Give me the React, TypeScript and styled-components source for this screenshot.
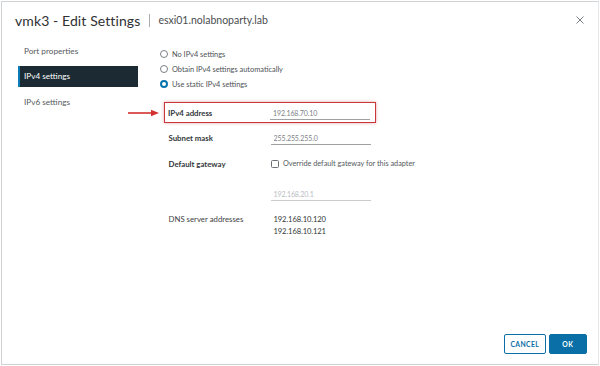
import React from "react";
import styled, { createGlobalStyle } from "styled-components";

const GlobalStyle = createGlobalStyle`
  html, body { margin: 0; padding: 0; background: #ffffff; }
  body { font-family: Lato, "Open Sans", "Liberation Sans", sans-serif; }
  * { box-sizing: border-box; }
`;

const Page = styled.div`
  width: 600px;
  height: 366px;
  padding: 1px;
  background: #ffffff;
`;

const Dialog = styled.div`
  width: 598px;
  height: 364px;
  border: 1px solid #cfd3d6;
  border-right-color: #e4e6e8;
  display: flex;
  flex-direction: column;
  background: #ffffff;
`;

const Header = styled.div`
  height: 36px;
  display: flex;
  align-items: center;
  padding: 0 12px 0 13px;
  flex: none;
`;

const Title = styled.div`
  font-size: 14px;
  color: #2f3133;
  letter-spacing: 0.1px;
`;

const Divider = styled.div`
  width: 1px;
  height: 13px;
  background: #a9adb0;
  margin: 0 8px 0 9px;
`;

const Subtitle = styled.div`
  font-size: 10.5px;
  color: #4a4d50;
`;

const CloseButton = styled.button`
  margin-left: auto;
  width: 12px;
  height: 12px;
  padding: 0;
  border: none;
  background: transparent;
  display: flex;
  align-items: center;
  justify-content: center;
`;

const Body = styled.div`
  flex: 1;
  display: flex;
  min-height: 0;
`;

const Nav = styled.div`
  width: 120px;
  margin-left: 15.5px;
  padding-top: 2.2px;
  display: flex;
  flex-direction: column;
  gap: 4px;
  flex: none;
`;

const NavItem = styled.div<{ $active?: boolean }>`
  height: 21.5px;
  display: flex;
  align-items: center;
  padding-left: 4.5px;
  font-size: 8.2px;
  color: ${(p) => (p.$active ? "#ffffff" : "#565a5e")};
  background: ${(p) => (p.$active ? "#1c2b33" : "transparent")};
  border-left: 2px solid ${(p) => (p.$active ? "#0a7cb8" : "transparent")};
`;

const Content = styled.div`
  margin-left: 22px;
  padding-top: 8.5px;
  display: flex;
  flex-direction: column;
`;

const RadioRow = styled.label`
  height: 15px;
  display: flex;
  align-items: center;
  gap: 4.5px;
  font-size: 7.4px;
  color: #4e5256;
`;

const RadioDot = styled.span<{ $checked?: boolean }>`
  width: 8px;
  height: 8px;
  border-radius: 50%;
  background: #ffffff;
  border: ${(p) => (p.$checked ? "2.6px solid #0a74ad" : "1px solid #7c8084")};
  flex: none;
`;

const FormRow = styled.div<{ $mt: number; $highlight?: boolean }>`
  position: relative;
  width: 212px;
  min-height: 21px;
  margin-top: ${(p) => p.$mt}px;
  margin-left: 4px;
  padding-left: ${(p) => (p.$highlight ? 3.5 : 5)}px;
  display: flex;
  align-items: center;
  white-space: nowrap;
  border: ${(p) => (p.$highlight ? "1.5px solid #c9373a" : "none")};
  box-shadow: ${(p) =>
    p.$highlight ? "0 0 3px rgba(201, 55, 58, 0.45)" : "none"};
`;

const Label = styled.div<{ $plain?: boolean }>`
  width: 102px;
  flex: none;
  font-size: 7.8px;
  font-weight: ${(p) => (p.$plain ? 400 : 700)};
  color: ${(p) => (p.$plain ? "#3e4245" : "#33373a")};
  align-self: ${(p) => (p.$plain ? "flex-start" : "auto")};
  margin-top: ${(p) => (p.$plain ? 10 : 0)}px;
`;

const FieldInput = styled.input<{ $disabled?: boolean }>`
  width: 100px;
  height: 12px;
  margin: 2px 0 0 0;
  padding: 0 0 1px 3px;
  border: none;
  border-bottom: 1px solid ${(p) => (p.$disabled ? "#c9cccf" : "#9ea2a5")};
  outline: none;
  background: transparent;
  font-family: Lato, "Open Sans", "Liberation Sans", sans-serif;
  font-size: 7px;
  letter-spacing: -0.1px;
  color: ${(p) => (p.$disabled ? "#b9bcbf" : "#7d8185")};
`;

const CheckRow = styled.label`
  display: flex;
  align-items: center;
  gap: 4.5px;
  font-size: 7.3px;
  color: #55595d;
  white-space: nowrap;
`;

const CheckBox = styled.span`
  width: 8px;
  height: 8px;
  border: 1px solid #6f7377;
  border-radius: 1.5px;
  background: #ffffff;
  flex: none;
`;

const ValueList = styled.div`
  display: flex;
  flex-direction: column;
  padding-left: 3px;
  margin-top: 10px;
  gap: 1.5px;
  font-size: 7.6px;
  letter-spacing: -0.1px;
  color: #33373a;
  line-height: 10px;
`;

const Arrow = styled.svg`
  position: absolute;
  left: -37px;
  top: 50%;
  margin-top: -4px;
  width: 31px;
  height: 8px;
  overflow: visible;
`;

const Footer = styled.div`
  display: flex;
  justify-content: flex-end;
  gap: 3.6px;
  padding: 0 11.5px 10.5px 0;
  flex: none;
`;

const Button = styled.button<{ $primary?: boolean }>`
  height: 19.3px;
  padding: 0;
  width: ${(p) => (p.$primary ? 37.4 : 41.4)}px;
  border-radius: 2px;
  border: 1px solid #0a6fa6;
  background: ${(p) => (p.$primary ? "#0a6fa6" : "#ffffff")};
  color: ${(p) => (p.$primary ? "#ffffff" : "#0a6fa6")};
  font-family: Lato, "Open Sans", "Liberation Sans", sans-serif;
  font-size: 6.8px;
  font-weight: 700;
  letter-spacing: 0.4px;
`;

export default function App() {
  return (
    <>
      <GlobalStyle />
      <Page>
        <Dialog>
          <Header>
            <Title>vmk3 - Edit Settings</Title>
            <Divider />
            <Subtitle>esxi01.nolabnoparty.lab</Subtitle>
            <CloseButton aria-label="Close">
              <svg width="8" height="8" viewBox="0 0 8 8">
                <path d="M0.5 0.5 L7.5 7.5 M7.5 0.5 L0.5 7.5" stroke="#6d7175" strokeWidth="0.9" fill="none" />
              </svg>
            </CloseButton>
          </Header>
          <Body>
            <Nav>
              <NavItem>Port properties</NavItem>
              <NavItem $active>IPv4 settings</NavItem>
              <NavItem>IPv6 settings</NavItem>
            </Nav>
            <Content>
              <RadioRow>
                <RadioDot />
                No IPv4 settings
              </RadioRow>
              <RadioRow>
                <RadioDot />
                Obtain IPv4 settings automatically
              </RadioRow>
              <RadioRow>
                <RadioDot $checked />
                Use static IPv4 settings
              </RadioRow>

              <FormRow $mt={10.5} $highlight>
                <Arrow viewBox="0 0 31 8">
                  <path d="M0 4 H25" stroke="#d2312f" strokeWidth="1.6" />
                  <path d="M23 0.8 L31 4 L23 7.2 Z" fill="#d2312f" />
                </Arrow>
                <Label>IPv4 address</Label>
                <FieldInput readOnly value="192.168.70.10" />
              </FormRow>
              <FormRow $mt={4}>
                <Label>Subnet mask</Label>
                <FieldInput readOnly value="255.255.255.0" />
              </FormRow>
              <FormRow $mt={5}>
                <Label>Default gateway</Label>
                <CheckRow>
                  <CheckBox />
                  Override default gateway for this adapter
                </CheckRow>
              </FormRow>
              <FormRow $mt={9}>
                <Label />
                <FieldInput $disabled readOnly value="192.168.20.1" />
              </FormRow>
              <FormRow $mt={0}>
                <Label $plain>DNS server addresses</Label>
                <ValueList>
                  <span>192.168.10.120</span>
                  <span>192.168.10.121</span>
                </ValueList>
              </FormRow>
            </Content>
          </Body>
          <Footer>
            <Button>CANCEL</Button>
            <Button $primary>OK</Button>
          </Footer>
        </Dialog>
      </Page>
    </>
  );
}
